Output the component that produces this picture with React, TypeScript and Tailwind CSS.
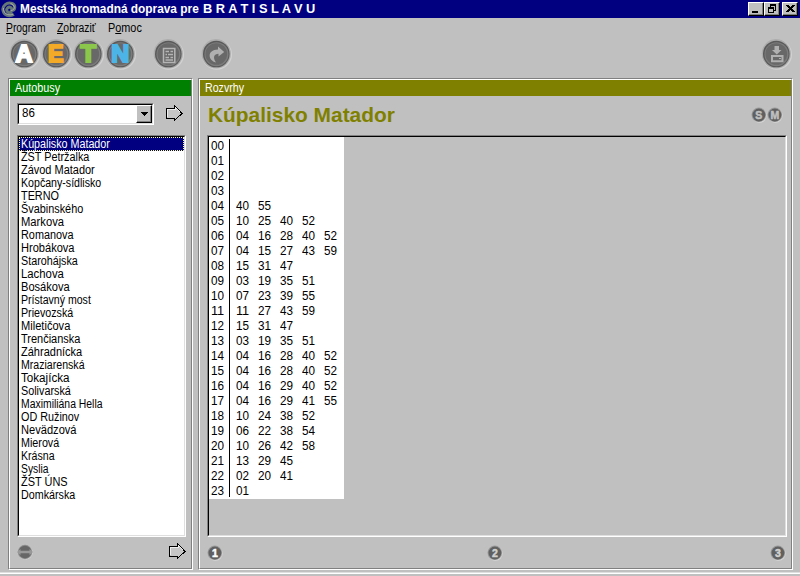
import { useLayoutEffect, useRef, useState } from 'react';
import type { ReactNode } from 'react';

const stops: [string, number][] = [
  ['Kúpalisko Matador', 88.5], ['ŽST Petržalka', 68.5], ['Závod Matador', 74], ['Kopčany-sídlisko', 80.5],
  ['TERNO', 38], ['Švabinského', 62.5], ['Markova', 43], ['Romanova', 52.5], ['Hrobákova', 53.5],
  ['Starohájska', 56.5], ['Lachova', 42.5], ['Bosákova', 49], ['Prístavný most', 69.5], ['Prievozská', 52.5],
  ['Miletičova', 49], ['Trenčianska', 59.5], ['Záhradnícka', 61.5], ['Mraziarenská', 63.5], ['Tokajícka', 48.5],
  ['Solivarská', 49.5], ['Maximiliána Hella', 81.5], ['OD Ružinov', 58.5], ['Nevädzová', 55.5], ['Mierová', 38.5],
  ['Krásna', 33.5], ['Syslia', 27.5], ['ŽST ÚNS', 46.5], ['Domkárska', 54.5],
];

const timetable = [
  '', '', '', '', '40 55', '10 25 40 52', '04 16 28 40 52', '04 15 27 43 59', '15 31 47', '03 19 35 51',
  '07 23 39 55', '11 27 43 59', '15 31 47', '03 19 35 51', '04 16 28 40 52', '04 16 28 40 52',
  '04 16 29 40 52', '04 16 29 41 55', '10 24 38 52', '06 22 38 54', '10 26 42 58', '13 29 45', '02 20 41', '01',
];

/* Condenses a label horizontally so that it occupies the given width. */
function Fit({ w, children }: { w: number; children: ReactNode }) {
  const ref = useRef<HTMLSpanElement>(null);
  const [scale, setScale] = useState(1);
  useLayoutEffect(() => {
    if (ref.current) setScale(w / ref.current.offsetWidth);
  }, [w]);
  return (
    <span ref={ref} className="inline-block origin-left whitespace-pre" style={{ transform: `scaleX(${scale})` }}>
      {children}
    </span>
  );
}

function RoundButton({ children }: { children: ReactNode }) {
  return (
    <button className="h-8 w-8 shrink-0">
      <svg className="overflow-visible" width="32" height="32" viewBox="0 0 32 32">
        <circle cx="16.8" cy="16.5" r="15.2" fill="#d2d2d2" />
        <circle cx="16.2" cy="15.8" r="14.7" fill="#acacac" />
        <circle cx="16.3" cy="16" r="13.3" fill="#5a5a5a" />
        <circle cx="16.5" cy="16.2" r="12" fill="#7c7c7c" />
        <circle cx="16.3" cy="16" r="10.8" fill="#686868" />
        {children}
      </svg>
    </button>
  );
}

function Letter({ c, color, x, w }: { c: string; color: string; x: number; w: number }) {
  return (
    <RoundButton>
      <text x={x} y="24.2" fontSize="23" fontWeight="900" fill={color} stroke={color}
        strokeWidth="2" textLength={w} lengthAdjust="spacingAndGlyphs">{c}</text>
    </RoundButton>
  );
}

function SmallRound({ c, color }: { c: string; color: string }) {
  return (
    <svg className="shrink-0" width="16" height="16" viewBox="0 0 16 16">
      <circle cx="8.4" cy="8.6" r="7.2" fill="#d8d8d8" />
      <circle cx="7.8" cy="7.8" r="7.3" fill="#999" />
      <circle cx="7.9" cy="8" r="6.4" fill="#606060" />
      <text x="7.8" y="11.8" textAnchor="middle" fontSize="10.5" fontWeight="700" fill={color} stroke={color} strokeWidth="0.5">{c}</text>
    </svg>
  );
}

function Arrow() {
  return (
    <svg width="17" height="17" viewBox="0 0 17 17" shapeRendering="crispEdges">
      <path d="M.5 3.5H8.5V.5L16 8.5L8.5 15.5V13.5H.5Z" fill="#c6c6c6" stroke="#000" />
      <path d="M1.5 12V4.5H9.5V2.5L14 7" fill="none" stroke="#eee" />
    </svg>
  );
}

function CaptionButton({ children }: { children: ReactNode }) {
  return (
    <button className="h-[14px] w-4 border border-t-white border-l-white border-r-black border-b-black bg-[#c0c0c0] shadow-[inset_-1px_-1px_#808080]">
      <svg className="block" width="14" height="12" viewBox="0 0 14 12" fill="none" stroke="#000" shapeRendering="crispEdges">{children}</svg>
    </button>
  );
}

function Sunken({ className, children }: { className: string; children?: ReactNode }) {
  return (
    <div className={`shrink-0 border border-t-[#808080] border-l-[#808080] border-r-white border-b-white ${className}`}>
      <div className="h-full border border-t-black border-l-black border-r-[#dfdfdf] border-b-[#dfdfdf]">{children}</div>
    </div>
  );
}

function Panel({ title, titleWidth, className, bar, children }: { title: string; titleWidth: number; className: string; bar: string; children: ReactNode }) {
  return (
    <section className={`h-[492px] shrink-0 border border-t-[#808080] border-l-[#808080] border-r-white border-b-white ${className}`}>
      <div className="flex h-full flex-col border border-t-white border-l-white border-r-[#808080] border-b-[#808080]">
        <h2 className={`h-4 shrink-0 pl-[5px] leading-[17px] text-white ${bar}`}><Fit w={titleWidth}>{title}</Fit></h2>
        {children}
      </div>
    </section>
  );
}

export default function App() {
  return (
    <div className="flex h-[576px] w-[800px] flex-col overflow-hidden bg-[#c0c0c0] font-['Liberation_Sans',Arial,sans-serif] text-[12px] leading-[13px] text-black">
      <header className="flex h-[18px] shrink-0 items-center bg-[#000080] pr-[2px] pl-px text-white">
        <svg width="17" height="17" viewBox="0 0 17 17" fill="none">
          <path d="M11.5 11.5C7 14 4.5 9 6.5 7C8.5 5 12 7 10.5 9.5C14.5 9.5 15 4 11 2.5C6 .5 1 5 2 9.5C3 14.5 8 16 13 13.5" stroke="#667777" strokeWidth="3" />
          <path d="M10 9.5C15 9 14 3.5 9.5 2.5M2.5 7C2 12 6 15 12 13.5" stroke="#aaa" />
        </svg>
        <h1 className="ml-[2px] flex font-bold">
          <span className="w-[183px]"><Fit w={179}>Mestská hromadná doprava pre</Fit></span>
          <Fit w={112}>B R A T I S L A V U</Fit>
        </h1>
        <div className="ml-auto flex">
          <CaptionButton><path d="M3 9H9" strokeWidth="2" /></CaptionButton>
          <CaptionButton><path d="M5 1H11M5 2H11M5.5 1V4M10.5 1V7.5H8M3 4H9M3 5H9M3.5 4V9.5H8.5V4" /></CaptionButton>
          <span className="w-[2px]" />
          <CaptionButton><path d="M3.5 2L10.5 9M4.5 2L11.5 9M10.5 2L3.5 9M11.5 2L4.5 9" /></CaptionButton>
        </div>
      </header>

      <nav className="flex h-5 shrink-0 items-center pl-[6px]">
        <span className="w-[51px]"><Fit w={39.5}><u>P</u>rogram</Fit></span>
        <span className="w-[51px]"><Fit w={39}><u>Z</u>obraziť</Fit></span>
        <Fit w={33.5}>P<u>o</u>moc</Fit>
      </nav>

      <div className="flex h-10 shrink-0 pr-2 pl-2">
        <Letter c="A" color="#ffffff" x={7.6} w={17} />
        <Letter c="E" color="#f4a927" x={8} w={15.5} />
        <Letter c="T" color="#8ac74a" x={8.6} w={15.5} />
        <Letter c="N" color="#4cb4e7" x={7.2} w={18} />
        <span className="w-4" />
        <RoundButton>
          <path d="M11.5 10.5H22.8V24.5H11.5ZM13.5 13.5H17M18.5 13.5H21M13.5 16.5H15M16 16.5H21M13.5 19.5H17M18.5 19.5H21M13.5 22H21" fill="none" stroke="#b4b4b4" strokeWidth="1.5" />
        </RoundButton>
        <span className="w-4" />
        <RoundButton>
          <path d="M18 8.5L24.2 14L18.5 18.5V15.8C14 15.8 12.5 19.5 16 24.5C8 22.5 6.5 12 18 11.5Z" fill="#b0b0b0" />
        </RoundButton>
        <span className="ml-auto" />
        <RoundButton>
          <path d="M14.5 8H19V12H21.5L16.8 16.5L12 12H14.5Z" fill="#b0b0b0" />
          <path d="M12 18H22.5V23.3H12Z" fill="none" stroke="#b0b0b0" strokeWidth="2" />
          <path d="M19 20.5H21" stroke="#b0b0b0" />
        </RoundButton>
      </div>

      <main className="flex shrink-0 gap-[5px] pl-2">
        <Panel title="Autobusy" titleWidth={45} className="w-[185px]" bar="bg-[#008000]">
          <div className="flex shrink-0 pt-[7px] pl-[7px]">
            <Sunken className="h-[22px] w-[137px] bg-white">
              <div className="flex h-full justify-between">
                <span className="pt-[2px] pl-[3px]"><Fit w={12.5}>86</Fit></span>
                <button className="flex w-4 items-center justify-center border border-t-white border-l-white border-r-black border-b-black bg-[#c0c0c0] shadow-[inset_-1px_-1px_#808080]">
                  <svg width="7" height="4" viewBox="0 0 7 4" shapeRendering="crispEdges"><path d="M0 0H7L3.5 4Z" /></svg>
                </button>
              </div>
            </Sunken>
            <button className="ml-3 flex h-[22px] items-start pt-[2px]"><Arrow /></button>
          </div>
          <Sunken className="mt-[10px] ml-[7px] h-[402px] w-[169px] bg-white">
            <ul>
              {stops.map(([s, w], i) => (
                <li key={s} className={i === 0 ? 'flex h-[14px] items-start bg-[#000080] pt-px pl-[2px] text-white outline outline-1 -outline-offset-1 outline-dotted outline-[#ffff80]' : 'flex h-[13px] pl-[2px]'}>
                  <Fit w={w}>{s}</Fit>
                </li>
              ))}
            </ul>
          </Sunken>
          <div className="flex shrink-0 justify-between pt-[6px] pr-[5px] pl-[7px]">
            <svg className="mt-px" width="16" height="16" viewBox="0 0 16 16">
              <circle cx="8.5" cy="8.5" r="7.2" fill="#d4d4d4" /><circle cx="8" cy="8" r="7.2" fill="#8c8c8c" />
              <circle cx="8" cy="8" r="6.2" fill="#666" />
              <path d="M0 8L3.5 5V6.7H12.5V5L16 8L12.5 11V9.3H3.5V11Z" fill="#999" />
            </svg>
            <Arrow />
          </div>
        </Panel>

        <Panel title="Rozvrhy" titleWidth={39} className="w-[595px]" bar="bg-[#808000]">
          <div className="flex h-[39px] shrink-0 items-center justify-between pr-2 pl-2">
            <h3 className="mb-[2px] text-[21px] leading-6 font-bold text-[#808000]"><Fit w={187}>Kúpalisko Matador</Fit></h3>
            <div className="mb-[2px] flex"><SmallRound c="S" color="#c0c0c0" /><SmallRound c="M" color="#c0c0c0" /></div>
          </div>
          <Sunken className="ml-[7px] h-[402px] w-[580px]">
            <div className="relative h-[362px] w-[135px] bg-white pt-[2px] leading-[15px]">
              <span className="absolute top-[2px] left-5 h-[358px] w-px bg-black" />
              {timetable.map((row, h) => (
                <div key={h} className="flex h-[15px] pl-[2px]">
                  <span className="w-[25px] shrink-0"><Fit w={12.7}>{String(h).padStart(2, '0')}</Fit></span>
                  {row.split(' ').map((m, i) => <span key={i} className="w-[22px] shrink-0">{m && <Fit w={12.7}>{m}</Fit>}</span>)}
                </div>
              ))}
            </div>
          </Sunken>
          <div className="flex shrink-0 justify-between pt-2 pr-[5px] pl-[7px]">
            <SmallRound c="1" color="#ffffff" />
            <span className="-ml-[3px] flex"><SmallRound c="2" color="#d0d0d0" /></span>
            <SmallRound c="3" color="#d0d0d0" />
          </div>
        </Panel>
      </main>
      <div className="mt-[2px] h-[2px] shrink-0 border-t border-b border-t-[#dfdfdf] border-b-white" />
    </div>
  );
}
